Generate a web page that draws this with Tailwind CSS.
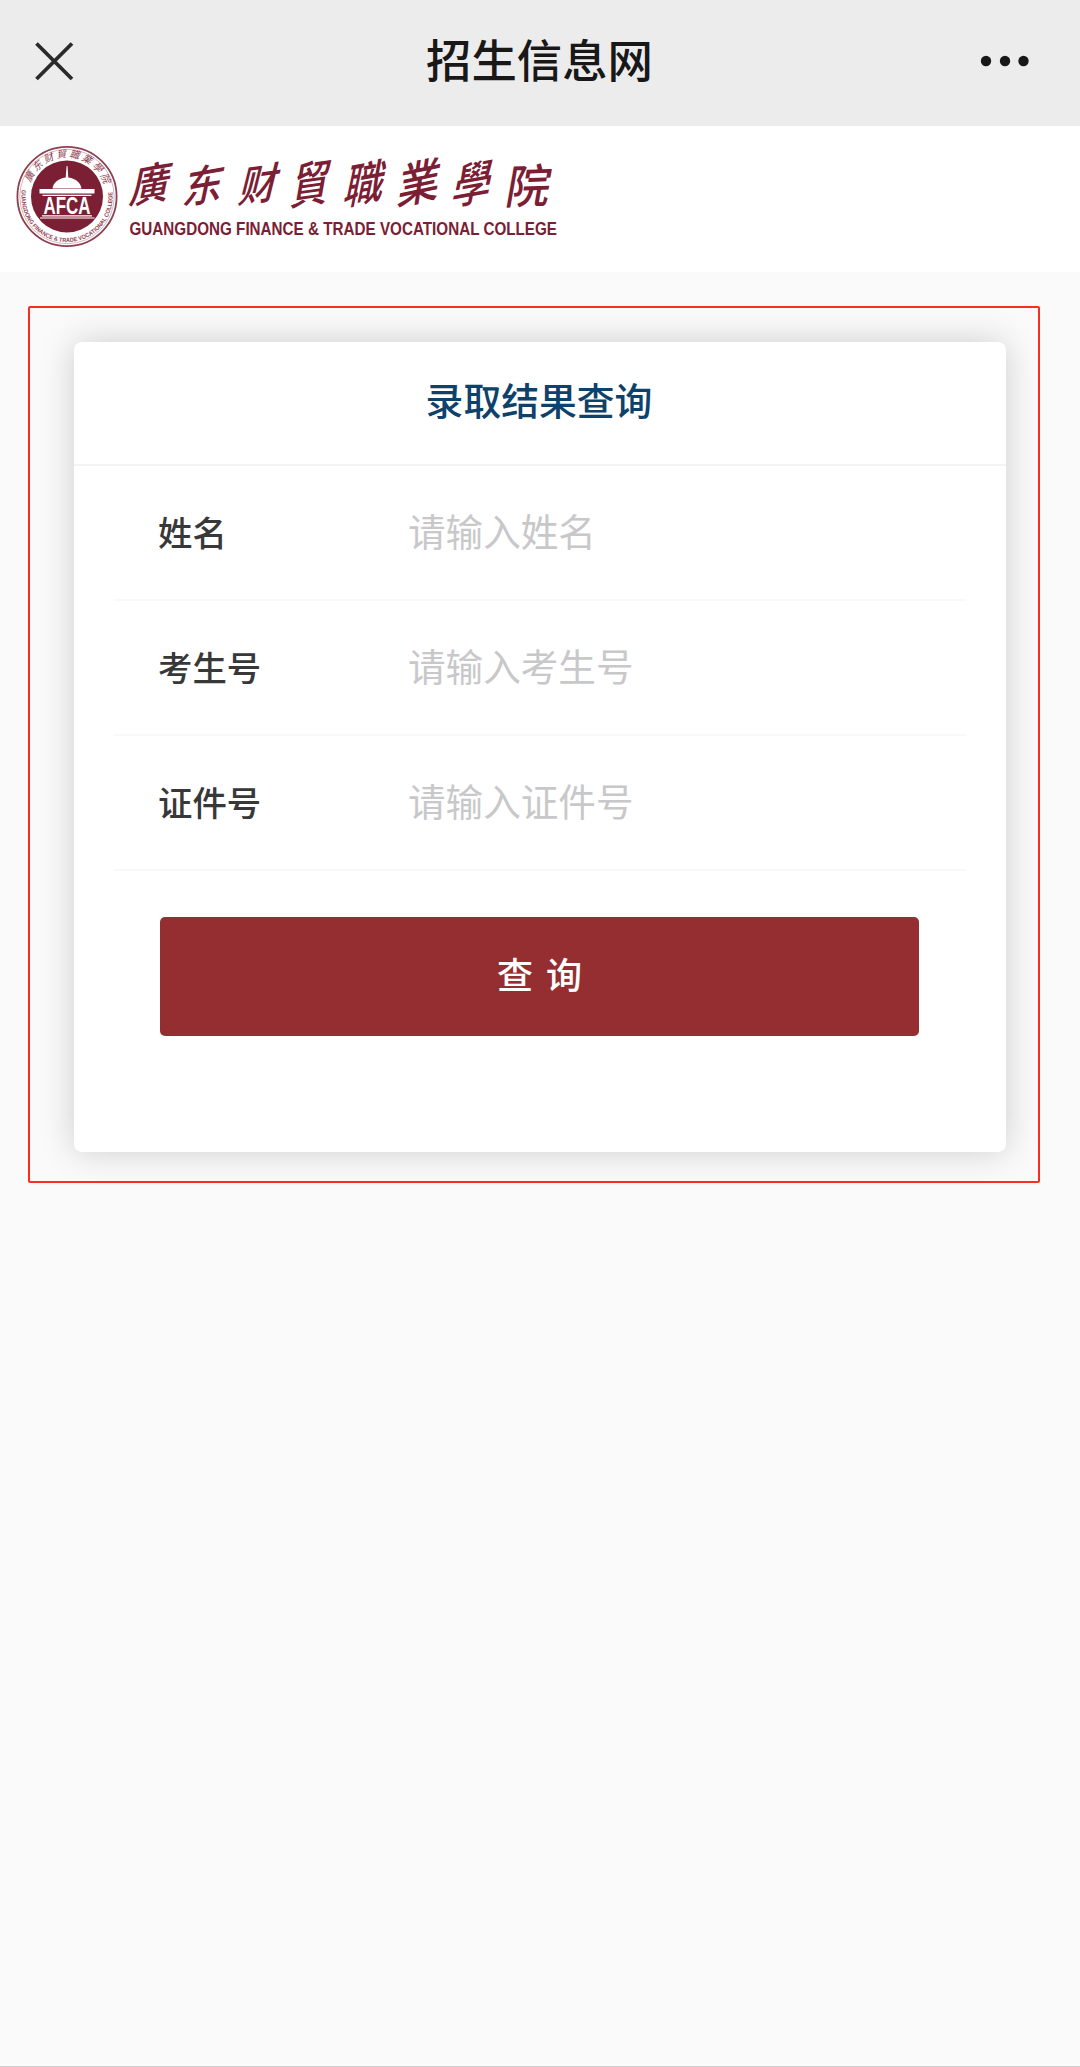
<!DOCTYPE html>
<html lang="zh-CN">
<head>
<meta charset="utf-8">
<title>招生信息网</title>
<script src="https://cdn.jsdelivr.net/npm/@tailwindcss/browser@4"></script>
</head>
<body class="bg-[#fafafa]">
<div class="flex h-[2067px] w-[1080px] flex-col border-b border-[#cfcfcf] bg-[#fafafa] font-['Noto_Sans_CJK_SC',sans-serif]">
  <header class="flex h-[126px] shrink-0 items-center justify-between bg-[#ececec] pr-[50px] pb-1 pl-[34px]">
    <svg class="h-10 w-10" viewBox="0 0 40 40" fill="none" stroke="#2a2a2a" stroke-width="3.8" stroke-linecap="butt"><path d="M2.500 2.500 38 38M38 2.500 2.500 38"/></svg>
    <h1 class="-mt-1 ml-[25px] text-[45.4px] leading-none font-medium text-[#181818]">招生信息网</h1>
    <svg class="h-3 w-[50px]" viewBox="0 0 50 12" fill="#181818"><circle cx="6" cy="6" r="5.2"/><circle cx="25" cy="6" r="5.2"/><circle cx="43.5" cy="6" r="5.2"/></svg>
  </header>

  <div class="h-[146px] shrink-0 bg-white">
    <svg class="block" width="600" height="146" viewBox="0 126 600 146" fill="#7b2034">
      <defs>
        <path id="arc-top" d="M28 196.500a39 39 0 0 1 78 0"/>
        <path id="arc-bottom" d="M22.400 187a45.600 45.600 0 1 0 89.200 0"/>
      </defs>
      <!-- seal -->
      <circle cx="67" cy="196.500" r="49.600" fill="#fff" stroke="#8d4152" stroke-width="1.800"/>
      <circle cx="67" cy="196.500" r="47.200" fill="none" stroke="#b98794" stroke-width=".6"/>
      <circle cx="67" cy="196.500" r="36"/>
      <text font-size="10" font-style="italic" opacity=".85"><textPath href="#arc-top" startOffset="14" textLength="96">廣东财貿職業學院</textPath></text>
      <text font-size="6" font-weight="700" font-family="Liberation Sans, sans-serif" opacity=".85"><textPath href="#arc-bottom" startOffset="3" textLength="154" lengthAdjust="spacingAndGlyphs">GUANGDONG FINANCE &amp; TRADE VOCATIONAL COLLEGE</textPath></text>
      <g fill="#fff">
        <path d="M66.600 166h.9l.8 11.600c8 1 12.600 6 13.200 11h-29c.6-5 5.400-10 13.200-11z"/>
        <path d="M39.500 189h55v4.600h-55zM42.500 194.800h49v1.300h-49zM42 215.200h50v1.300H42zM40 217.400h54.500v1.200H40z"/>
      </g>
      <text x="43.500" y="214.200" font-size="23.500" font-weight="700" font-family="Liberation Sans, sans-serif" fill="#fff" textLength="47" lengthAdjust="spacingAndGlyphs">AFCA</text>
      <!-- college name -->
      <g font-size="44" font-weight="500" font-family="'Noto Sans CJK SC', sans-serif">
        <text transform="translate(128 204) rotate(-10) skewX(-22) scale(.92 .98)">廣</text>
        <text transform="translate(181 205) rotate(-10) skewX(-22) scale(.92 .95)">东</text>
        <text transform="translate(237 203) rotate(-8) skewX(-22) scale(.88 .95)">财</text>
        <text transform="translate(289 205) rotate(-8) skewX(-18) scale(.88 1.100)">貿</text>
        <text transform="translate(342 205) rotate(-10) skewX(-22) scale(.92 1.050)">職</text>
        <text transform="translate(396 205) rotate(-12) skewX(-20) scale(.98 1.050)">業</text>
        <text transform="translate(450 205) rotate(-10) skewX(-22) scale(.9 1.050)">學</text>
        <text transform="translate(504 204) rotate(-2) skewX(-12) scale(1 1.050)">院</text>
      </g>
      <text x="129.500" y="235.300" font-size="17.600" font-weight="700" font-family="Liberation Sans, sans-serif" textLength="427.500" lengthAdjust="spacingAndGlyphs">GUANGDONG FINANCE &amp; TRADE VOCATIONAL COLLEGE</text>
    </svg>
  </div>

  <main class="mt-[34px] ml-7 h-[877px] w-[1012px] shrink-0 rounded-xs border-2 border-[#fb2c22] pt-[34px] pl-[44px]">
    <section class="flex h-[810px] w-[932px] flex-col rounded-lg bg-white shadow-[0_0_34px_rgba(0,0,0,0.18)]">
      <h2 class="flex h-[124px] items-center justify-center border-b-2 border-[#f3f3f3] pr-[2px] pb-[8px] text-[37.8px] leading-none font-medium text-[#0e426a]">录取结果查询</h2>
      <form class="flex flex-col">
        <label class="mx-10 flex h-[135px] items-center border-b-2 border-[#f9f9f9] pl-[44px]">
          <span class="w-[250px] pb-[3px] text-[34.4px] leading-none font-medium text-[#383838]">姓名</span>
          <span class="pb-[5px] text-[37.600px] leading-none text-[#c8c8ca]">请输入姓名</span>
        </label>
        <label class="mx-10 flex h-[135px] items-center border-b-2 border-[#f9f9f9] pl-[44px]">
          <span class="w-[250px] pb-[3px] text-[34.4px] leading-none font-medium text-[#383838]">考生号</span>
          <span class="pb-[5px] text-[37.600px] leading-none text-[#c8c8ca]">请输入考生号</span>
        </label>
        <label class="mx-10 flex h-[135px] items-center border-b-2 border-[#f9f9f9] pl-[44px]">
          <span class="w-[250px] pb-[3px] text-[34.4px] leading-none font-medium text-[#383838]">证件号</span>
          <span class="pb-[5px] text-[37.600px] leading-none text-[#c8c8ca]">请输入证件号</span>
        </label>
        <button type="button" class="mt-[46px] ml-[86px] flex h-[119px] w-[759px] items-center justify-center rounded-[5px] bg-[#942e31] pb-[7px] text-[36px] leading-none font-medium text-white [word-spacing:5px]">查 询</button>
      </form>
    </section>
  </main>
</div>
</body>
</html>
